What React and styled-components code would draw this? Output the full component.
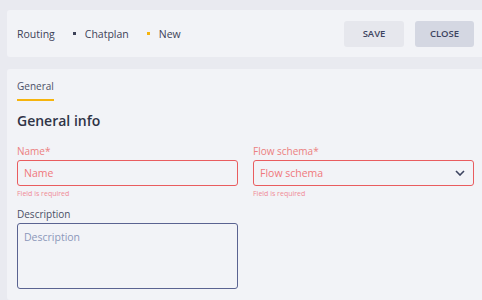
import React from 'react';
import styled, { createGlobalStyle } from 'styled-components';

const GlobalStyle = createGlobalStyle`
  html, body {
    margin: 0;
    padding: 0;
    background: #e9eaf0;
    font-family: "Open Sans", "Liberation Sans", sans-serif;
    color: #3a3f56;
  }
`;

const Page = styled.div`
  width: 482px;
  height: 300px;
  overflow: hidden;
  padding: 10px 0 0 7px;
  box-sizing: border-box;
  display: flex;
  flex-direction: column;
  gap: 12px;
`;

const Card = styled.div`
  background: #f2f3f7;
  border-radius: 3px 0 0 3px;
  box-sizing: border-box;
`;

const Header = styled(Card)`
  height: 47px;
  display: flex;
  align-items: center;
  justify-content: space-between;
  padding: 0 8px 0 10px;
`;

const Crumbs = styled.div`
  display: flex;
  align-items: center;
  font-size: 10.5px;
`;

const Crumb = styled.span`
  color: #3d4258;
`;

const Dot = styled.span`
  width: 3px;
  height: 3px;
  margin: 0 9px 0 18px;
  background: ${p => p.$color};
`;

const Actions = styled.div`
  display: flex;
  gap: 11px;
`;

const Button = styled.button`
  width: ${p => p.$width}px;
  height: 26px;
  border: none;
  border-radius: 3px;
  background: ${p => p.$bg};
  color: #3d4460;
  font-family: inherit;
  font-size: 9.5px;
  font-weight: 600;
  cursor: pointer;
`;

const Content = styled(Card)`
  flex: 1;
  padding: 4px 8px 0 10px;
`;

const Tab = styled.div`
  display: inline-block;
  font-size: 10px;
  color: #4a4f66;
  padding: 3px 0 6px;
  border-bottom: 2px solid #f6b40e;
`;

const Heading = styled.h2`
  margin: 10px 0 15px;
  font-size: 14px;
  font-weight: 600;
  color: #2f3346;
`;

const Grid = styled.div`
  display: grid;
  grid-template-columns: 1fr 1fr;
  column-gap: 15px;
  row-gap: 10px;
`;

const Field = styled.div`
  display: flex;
  flex-direction: column;
`;

const Label = styled.label`
  font-size: 10px;
  color: ${p => (p.$error ? '#ec8080' : '#4a4f66')};
  margin-bottom: 2px;
  line-height: 13px;
`;

const InputBox = styled.div`
  height: 26px;
  box-sizing: border-box;
  border: 1px solid ${p => (p.$error ? '#e95c5f' : '#5a6391')};
  border-radius: 3px;
  display: flex;
  align-items: center;
  justify-content: space-between;
  padding: 0 8px 0 6px;
  font-size: 10.5px;
  color: ${p => (p.$error ? '#f0787c' : '#8c97ba')};
`;

const TextArea = styled.div`
  height: 66px;
  box-sizing: border-box;
  border: 1px solid #5a6391;
  border-radius: 3px;
  padding: 6px;
  font-size: 10.5px;
  color: #8c97ba;
`;

const Hint = styled.span`
  font-size: 7px;
  color: #f08a95;
  margin-top: 3px;
  line-height: 9px;
`;

const Chevron = () => (
  <svg width="10" height="6" viewBox="0 0 10 6">
    <path d="M1 1l4 4 4-4" fill="none" stroke="#3d4460" strokeWidth="1.6" />
  </svg>
);

export default function App() {
  return (
    <>
      <GlobalStyle />
      <Page>
        <Header>
          <Crumbs>
            <Crumb>Routing</Crumb>
            <Dot $color="#3d4258" />
            <Crumb>Chatplan</Crumb>
            <Dot $color="#f6b40e" />
            <Crumb>New</Crumb>
          </Crumbs>
          <Actions>
            <Button $width={60} $bg="#e6e7ed">SAVE</Button>
            <Button $width={59} $bg="#d4d7e2">CLOSE</Button>
          </Actions>
        </Header>
        <Content>
          <Tab>General</Tab>
          <Heading>General info</Heading>
          <Grid>
            <Field>
              <Label $error>Name*</Label>
              <InputBox $error>Name</InputBox>
              <Hint>Field is required</Hint>
            </Field>
            <Field>
              <Label $error>Flow schema*</Label>
              <InputBox $error>
                Flow schema
                <Chevron />
              </InputBox>
              <Hint>Field is required</Hint>
            </Field>
            <Field>
              <Label>Description</Label>
              <TextArea>Description</TextArea>
            </Field>
          </Grid>
        </Content>
      </Page>
    </>
  );
}
